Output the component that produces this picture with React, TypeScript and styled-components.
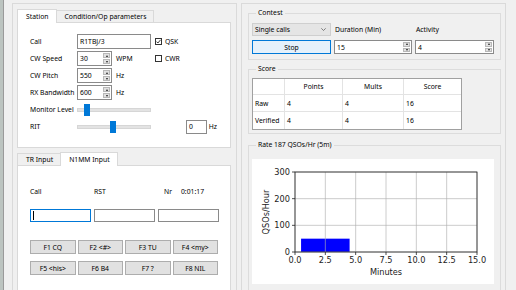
import styled, { createGlobalStyle } from 'styled-components';

const GlobalStyle = createGlobalStyle`
  html, body { margin: 0; padding: 0; background: #f0f0f0; }
  body {
    font-family: "Noto Sans", "Open Sans", sans-serif;
    font-size: 6.8px;
    color: #000;
  }
`;

const Window = styled.div`
  display: flex;
  width: 516px;
  height: 290px;
  overflow: hidden;
  background: #f0f0f0;
`;

const EdgeStrip = styled.div`
  width: 3px;
  flex-shrink: 0;
  background: #bcc4c0;
  border-right: 1px solid #9a9a9a;
`;

const Main = styled.div`
  display: flex;
  gap: 4px;
  padding: 3px 0 0 8px;
`;

const Panel = styled.div<{ $w: number }>`
  width: ${({ $w }) => $w}px;
  height: 300px;
  box-sizing: border-box;
  border: 1px solid #dadada;
  border-bottom: none;
`;

const LeftPanel = styled(Panel)`
  padding: 5px 0 0 4px;
`;

const RightPanel = styled(Panel)`
  padding: 4px 4px 0 6px;
  display: flex;
  flex-direction: column;
`;

const TabControl = styled.div<{ $top?: number }>`
  display: flex;
  flex-direction: column;
  width: 214px;
  margin-top: ${({ $top }) => $top || 0}px;
`;

const TabStrip = styled.div`
  display: flex;
  align-items: flex-end;
  height: 13px;
`;

const Tab = styled.div<{ $active?: boolean }>`
  box-sizing: border-box;
  height: ${({ $active }) => ($active ? 14 : 12)}px;
  margin-bottom: ${({ $active }) => ($active ? -1 : 0)}px;
  padding: 0 7px 0 8px;
  display: flex;
  align-items: center;
  border: 1px solid #d9d9d9;
  border-bottom: none;
  margin-left: -1px;
  background: ${({ $active }) => ($active ? '#fff' : '#f0f0f0')};
  position: relative;
  z-index: ${({ $active }) => ($active ? 1 : 0)};
  &:first-child { margin-left: 0; }
`;

const TabPage = styled.div<{ $h: number; $pt: number }>`
  box-sizing: border-box;
  height: ${({ $h }) => $h}px;
  background: #fff;
  border: 1px solid #d9d9d9;
  padding: ${({ $pt }) => $pt}px 0 0 12px;
`;

const FormRow = styled.div`
  display: flex;
  align-items: center;
  height: 15px;
  margin-bottom: 2px;
`;

const FieldLabel = styled.span`
  width: 47px;
  flex-shrink: 0;
`;

const Slot = styled.div`
  width: 78px;
  flex-shrink: 0;
  display: flex;
  align-items: center;
  gap: 4px;
`;

const TextBox = styled.div<{ $w: number; $h?: number; $focus?: boolean; $ml?: number }>`
  box-sizing: border-box;
  width: ${({ $w }) => $w}px;
  height: ${({ $h }) => $h || 15}px;
  margin-left: ${({ $ml }) => $ml || 0}px;
  border: 1px solid ${({ $focus }) => ($focus ? '#0078d7' : '#8a8a8a')};
  background: #fff;
  padding-left: 2px;
  display: flex;
  align-items: center;
  flex-shrink: 0;
`;

const Caret = styled.span`
  width: 1px;
  height: 9px;
  background: #000;
`;

const SpinBox = styled.div<{ $w: number; $h?: number }>`
  box-sizing: border-box;
  width: ${({ $w }) => $w}px;
  height: ${({ $h }) => $h || 15}px;
  display: flex;
  border: 1px solid #8a8a8a;
  background: #fff;
  flex-shrink: 0;
`;

const SpinValue = styled.span`
  flex: 1;
  padding-left: 2px;
  display: flex;
  align-items: center;
`;

const SpinButtons = styled.div`
  width: 7px;
  display: flex;
  flex-direction: column;
  gap: 1px;
  padding: 1px 1px 1px 0;
`;

const SpinArrow = styled.div<{ $down?: boolean }>`
  flex: 1;
  background: #e1e1e1;
  border: 1px solid #b8b8b8;
  display: flex;
  align-items: center;
  justify-content: center;
  &::after {
    content: '';
    border-left: 1.5px solid transparent;
    border-right: 1.5px solid transparent;
    ${({ $down }) => ($down ? 'border-top' : 'border-bottom')}: 2px solid #222;
  }
`;

const Unit = styled.span``;

const Check = styled.label`
  display: flex;
  align-items: center;
  gap: 3px;
`;

const CheckBox = styled.span`
  box-sizing: border-box;
  width: 7px;
  height: 7px;
  border: 1px solid #333;
  background: #fff;
  display: flex;
  align-items: center;
  justify-content: center;
`;

const Slider = styled.div`
  position: relative;
  width: 74px;
  height: 12px;
  flex-shrink: 0;
  display: flex;
  align-items: center;
  &::before {
    content: '';
    width: 100%;
    height: 2px;
    background: #e3e3e3;
    border: 1px solid #d6d6d6;
  }
`;

const Thumb = styled.span<{ $x: number }>`
  position: absolute;
  left: ${({ $x }) => $x}px;
  top: 0;
  width: 6px;
  height: 12px;
  background: #0078d7;
`;

const EntryGrid = styled.div<{ $mt?: number }>`
  display: grid;
  grid-template-columns: repeat(3, 61px);
  column-gap: 3px;
  margin-top: ${({ $mt }) => $mt || 0}px;
`;

const EntryLabel = styled.span`
  height: 10px;
  line-height: 10px;
  display: flex;
  gap: 9px;
`;

const NrLabel = styled(EntryLabel)`
  padding-left: 6px;
`;

const KeyGrid = styled.div`
  display: grid;
  grid-template-columns: repeat(4, 45.5px);
  gap: 7px 2px;
  margin-top: 18px;
`;

const KeyButton = styled.div`
  box-sizing: border-box;
  height: 14px;
  background: #e1e1e1;
  border: 1px solid #adadad;
  display: flex;
  align-items: center;
  justify-content: center;
`;

const Group = styled.fieldset<{ $mt?: number; $pt: number; $pb: number }>`
  margin: ${({ $mt }) => $mt || 0}px 0 0 0;
  padding: ${({ $pt }) => $pt}px 6px ${({ $pb }) => $pb}px 3px;
  border: 1px solid #dcdcdc;
  min-width: 0;
  width: 253px;
  box-sizing: border-box;
`;

const Legend = styled.legend`
  padding: 0 2px;
  margin-left: 4px;
  line-height: 10px;
`;

const ContestGrid = styled.div`
  display: grid;
  grid-template-columns: 79px 78px 79px;
  column-gap: 3px;
  row-gap: 4px;
`;

const Combo = styled.div`
  box-sizing: border-box;
  height: 13px;
  background: #e5e5e5;
  border: 1px solid #cfcfcf;
  display: flex;
  align-items: center;
  justify-content: space-between;
  padding: 0 4px 0 2px;
`;

const CellLabel = styled.span`
  display: flex;
  align-items: center;
  padding-left: 1px;
`;

const StopButton = styled.div`
  box-sizing: border-box;
  height: 14px;
  background: #e5f1fb;
  border: 1px solid #0078d7;
  display: flex;
  align-items: center;
  justify-content: center;
`;

const ScoreTable = styled.table`
  table-layout: fixed;
  width: 210px;
  border-collapse: separate;
  border-spacing: 0;
  border: 1px solid #a0a0a0;
  background: #fff;
  font-size: 6.8px;
  td, th {
    padding: 0 0 0 2px;
    border-right: 1px solid #e3e3e3;
    border-bottom: 1px solid #e3e3e3;
    text-align: left;
    font-weight: normal;
    white-space: nowrap;
  }
  th { text-align: center; padding: 0; }
  tr > *:last-child { border-right: none; }
  tr:last-child > * { border-bottom: none; }
`;

const Col = styled.col<{ $w: number }>`
  width: ${({ $w }) => $w}px;
`;

const Row = styled.tr<{ $h: number }>`
  height: ${({ $h }) => $h}px;
`;

const ChartBox = styled.div`
  width: 242px;
  height: 125px;
  background: #fff;
`;

const X0 = 43;
const X1 = 225;
const Y0 = 13;
const Y1 = 93;
const xp = (v: number) => X0 + (v / 15) * (X1 - X0);
const yp = (v: number) => Y1 - (v / 300) * (Y1 - Y0);
const xTicks = [0, 2.5, 5, 7.5, 10, 12.5, 15];
const yTicks = [0, 100, 200, 300];

const RateChart = () => (
  <ChartBox>
    <svg width="242" height="125" fontFamily="DejaVu Sans, sans-serif" fontSize="8.2">
      <rect x={xp(0.5)} y={yp(50)} width={xp(4.5) - xp(0.5)} height={Y1 - yp(50)} fill="#0000ff" />
      {xTicks.map((t) => (
        <line key={'gx' + t} x1={xp(t)} x2={xp(t)} y1={Y0} y2={Y1} stroke="#b0b0b0" strokeWidth="0.8" opacity="0.8" />
      ))}
      {yTicks.map((t) => (
        <line key={'gy' + t} x1={X0} x2={X1} y1={yp(t)} y2={yp(t)} stroke="#b0b0b0" strokeWidth="0.8" opacity="0.8" />
      ))}
      <rect x={X0} y={Y0} width={X1 - X0} height={Y1 - Y0} fill="none" stroke="#222" strokeWidth="0.8" />
      {xTicks.map((t) => (
        <g key={'tx' + t}>
          <line x1={xp(t)} x2={xp(t)} y1={Y1} y2={Y1 + 3} stroke="#222" strokeWidth="0.8" />
          <text x={xp(t)} y={Y1 + 11} textAnchor="middle" fill="#222">{t.toFixed(1)}</text>
        </g>
      ))}
      {yTicks.map((t) => (
        <g key={'ty' + t}>
          <line x1={X0 - 3} x2={X0} y1={yp(t)} y2={yp(t)} stroke="#222" strokeWidth="0.8" />
          <text x={X0 - 5} y={yp(t) + 3} textAnchor="end" fill="#222">{t}</text>
        </g>
      ))}
      <text x={(X0 + X1) / 2} y={116} textAnchor="middle" fill="#222">Minutes</text>
      <text x={17} y={53} textAnchor="middle" fill="#222" transform="rotate(-90 17 53)">QSOs/Hour</text>
    </svg>
  </ChartBox>
);

const Spin = ({ value, w, h }: { value: string; w: number; h?: number }) => (
  <SpinBox $w={w} $h={h}>
    <SpinValue>{value}</SpinValue>
    <SpinButtons>
      <SpinArrow />
      <SpinArrow $down />
    </SpinButtons>
  </SpinBox>
);

const keys = ['F1 CQ', 'F2 <#>', 'F3 TU', 'F4 <my>', 'F5 <his>', 'F6 B4', 'F7 ?', 'F8 NIL'];

const App = () => (
  <>
    <GlobalStyle />
    <Window>
      <EdgeStrip />
      <Main>
        <LeftPanel $w={225}>
          <TabControl>
            <TabStrip>
              <Tab $active>Station</Tab>
              <Tab>Condition/Op parameters</Tab>
            </TabStrip>
            <TabPage $h={126} $pt={11}>
              <FormRow>
                <FieldLabel>Call</FieldLabel>
                <Slot>
                  <TextBox $w={74}>R1TBJ/3</TextBox>
                </Slot>
                <Check>
                  <CheckBox>
                    <svg width="5" height="5" viewBox="0 0 5 5">
                      <polyline points="0.5,2.6 1.9,4 4.6,0.8" fill="none" stroke="#222" strokeWidth="0.9" />
                    </svg>
                  </CheckBox>
                  QSK
                </Check>
              </FormRow>
              <FormRow>
                <FieldLabel>CW Speed</FieldLabel>
                <Slot>
                  <Spin value="30" w={35} />
                  <Unit>WPM</Unit>
                </Slot>
                <Check>
                  <CheckBox />
                  CWR
                </Check>
              </FormRow>
              <FormRow>
                <FieldLabel>CW Pitch</FieldLabel>
                <Slot>
                  <Spin value="550" w={35} />
                  <Unit>Hz</Unit>
                </Slot>
              </FormRow>
              <FormRow>
                <FieldLabel>RX Bandwidth</FieldLabel>
                <Slot>
                  <Spin value="600" w={35} />
                  <Unit>Hz</Unit>
                </Slot>
              </FormRow>
              <FormRow>
                <FieldLabel>Monitor Level</FieldLabel>
                <Slider>
                  <Thumb $x={7} />
                </Slider>
              </FormRow>
              <FormRow>
                <FieldLabel>RIT</FieldLabel>
                <Slider>
                  <Thumb $x={33} />
                </Slider>
                <TextBox $w={21} $h={14} $ml={35}>0</TextBox>
                <Unit>&nbsp;Hz</Unit>
              </FormRow>
            </TabPage>
          </TabControl>

          <TabControl $top={4}>
            <TabStrip>
              <Tab>TR Input</Tab>
              <Tab $active>N1MM Input</Tab>
            </TabStrip>
            <TabPage $h={140} $pt={21}>
              <EntryGrid>
                <EntryLabel>Call</EntryLabel>
                <EntryLabel>RST</EntryLabel>
                <NrLabel>
                  <span>Nr</span>
                  <span>0:01:17</span>
                </NrLabel>
              </EntryGrid>
              <EntryGrid $mt={12}>
                <TextBox $w={61} $h={13} $focus>
                  <Caret />
                </TextBox>
                <TextBox $w={61} $h={13} />
                <TextBox $w={61} $h={13} />
              </EntryGrid>
              <KeyGrid>
                {keys.map((k) => (
                  <KeyButton key={k}>{k}</KeyButton>
                ))}
              </KeyGrid>
            </TabPage>
          </TabControl>
        </LeftPanel>

        <RightPanel $w={265}>
          <Group $pt={5} $pb={5}>
            <Legend>Contest</Legend>
            <ContestGrid>
              <Combo>
                <span>Single calls</span>
                <svg width="5" height="3" viewBox="0 0 5 3">
                  <polyline points="0.3,0.3 2.5,2.5 4.7,0.3" fill="none" stroke="#555" strokeWidth="0.7" />
                </svg>
              </Combo>
              <CellLabel>Duration (Min)</CellLabel>
              <CellLabel>Activity</CellLabel>
              <StopButton>Stop</StopButton>
              <Spin value="15" w={78} h={14} />
              <Spin value="4" w={79} h={14} />
            </ContestGrid>
          </Group>

          <Group $mt={4} $pt={4} $pb={3}>
            <Legend>Score</Legend>
            <ScoreTable>
              <colgroup>
                <Col $w={32} />
                <Col $w={58} />
                <Col $w={61} />
                <Col $w={57} />
              </colgroup>
              <tbody>
                <Row $h={16}>
                  <td />
                  <th>Points</th>
                  <th>Mults</th>
                  <th>Score</th>
                </Row>
                <Row $h={17}>
                  <td>Raw</td>
                  <td>4</td>
                  <td>4</td>
                  <td>16</td>
                </Row>
                <Row $h={17}>
                  <td>Verified</td>
                  <td>4</td>
                  <td>4</td>
                  <td>16</td>
                </Row>
              </tbody>
            </ScoreTable>
          </Group>

          <Group $mt={6} $pt={9} $pb={6}>
            <Legend>Rate 187 QSOs/Hr (5m)</Legend>
            <RateChart />
          </Group>
        </RightPanel>
      </Main>
    </Window>
  </>
);

export default App;
